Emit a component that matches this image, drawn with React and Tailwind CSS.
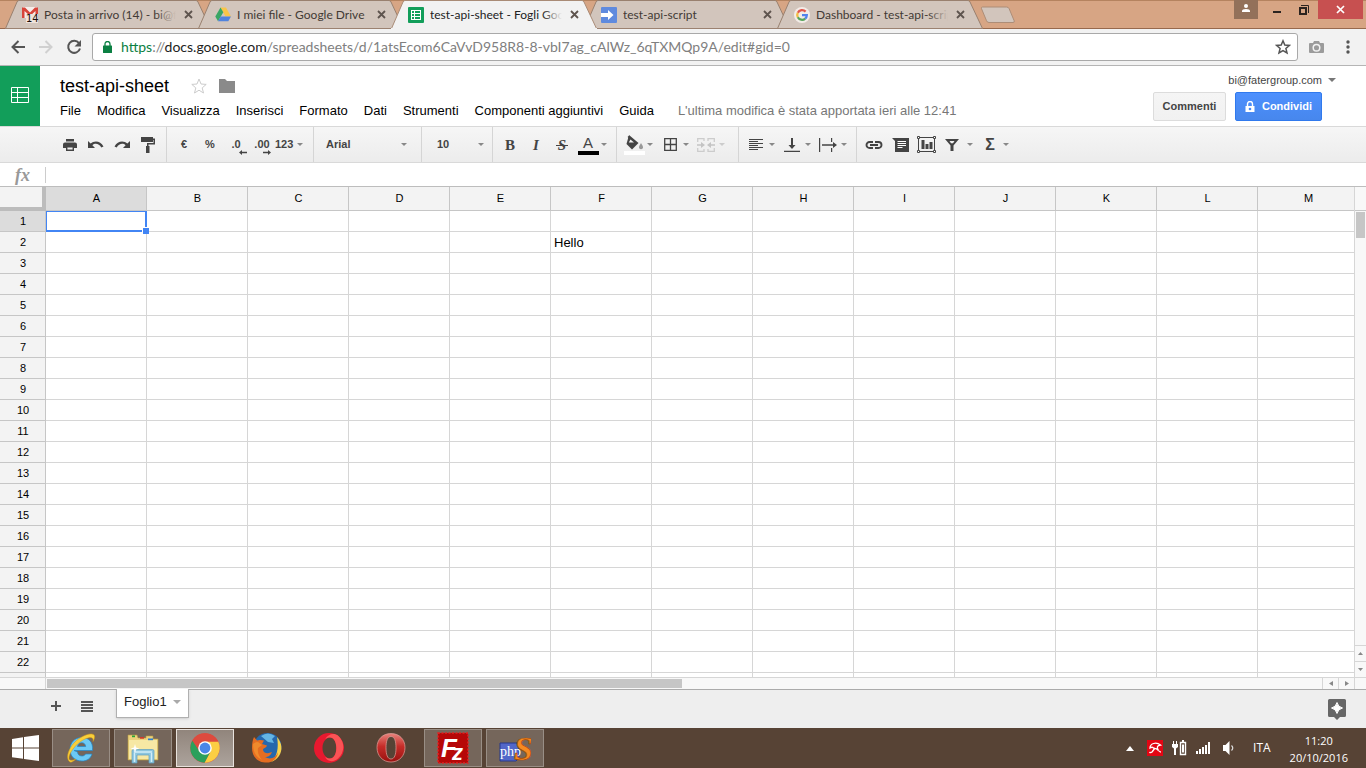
import React, { useState } from 'react';
import { clsx } from 'clsx';

const tabs = [
  { title: 'Posta in arrivo (14) - bi@fatergroup.com', icon: 'gmail', fade: true },
  { title: 'I miei file - Google Drive', icon: 'drive' },
  { title: 'test-api-sheet - Fogli Google', icon: 'sheets', fade: true },
  { title: 'test-api-script', icon: 'script' },
  { title: 'Dashboard - test-api-script', icon: 'google', fade: true },
];

const menus = ['File', 'Modifica', 'Visualizza', 'Inserisci', 'Formato', 'Dati', 'Strumenti', 'Componenti aggiuntivi', 'Guida'];
const columns = 'ABCDEFGHIJKLM'.split('');
const rows = Array.from({ length: 23 }, (_, i) => i + 1);
const initialCells = { F2: 'Hello' };

function Favicon({ name }) {
  if (name === 'gmail') {
    return (
      <svg width="17" height="17" viewBox="0 0 17 17">
        <rect x="1" y="1" width="14" height="11" fill="#f6eeea" />
        <path d="M0 1.500h3l5 5 5-5h3V12h-2.500V5L8 10 2.500 5v7H0z" fill="#d8453a" />
        <rect x="4" y="8" width="12" height="9" fill="#efe3dc" />
        <text x="4" y="16" fontSize="10" fill="#1b0d08" fontFamily="DejaVu Sans">14</text>
      </svg>
    );
  }
  if (name === 'drive') {
    return (
      <svg width="17" height="17" viewBox="0 0 17 17">
        <path d="M5.500 1.500h5.500l5 9h-5.500z" fill="#f9c548" />
        <path d="M5.500 1.500L8.300 6.200 3 15.200 0.300 10.500z" fill="#3aa665" />
        <path d="M5.700 10.500H16l-2.700 4.700H3z" fill="#5183dd" />
      </svg>
    );
  }
  if (name === 'sheets') {
    return (
      <svg width="16" height="16" viewBox="0 0 16 16">
        <rect width="16" height="16" rx="1" fill="#129e5a" />
        <path d="M3 3h10v10H3z" fill="#fff" />
        <path d="M4 4h2v2H4zM7 4h5v2H7zM4 7h2v2H4zM7 7h5v2H7zM4 10h2v2H4zM7 10h5v2H7z" fill="#129e5a" />
      </svg>
    );
  }
  if (name === 'script') {
    return (
      <svg width="16" height="16" viewBox="0 0 16 16">
        <rect width="16" height="16" rx="1" fill="#5f8ade" />
        <path d="M0 6h7V3l5.500 5L7 13v-3H0z" fill="#fff" />
      </svg>
    );
  }
  return (
    <svg width="16" height="16" viewBox="0 0 16 16">
      <circle cx="8" cy="8" r="8" fill="#f3ece8" />
      <g fill="none" strokeWidth="2.300">
        <path d="M11.600 4.600A4.800 4.800 0 0 0 3.800 5.700" stroke="#e2574c" />
        <path d="M3.800 5.700A4.800 4.800 0 0 0 3.800 10.300" stroke="#f2bd42" />
        <path d="M3.800 10.300A4.800 4.800 0 0 0 11.200 11.600" stroke="#58a55c" />
        <path d="M11.200 11.600A4.800 4.800 0 0 0 12.800 8.200H8" stroke="#5383ec" />
      </g>
    </svg>
  );
}

function BrowserTab({ tab, active, first }) {
  return (
    <div role="tab" aria-selected={active} className={clsx('relative h-[29px] w-[206px] shrink-0', !first && '-ml-[13px]', active && 'z-10')}>
      <svg className="absolute inset-0 h-full w-full" viewBox="0 0 206 29" preserveAspectRatio="none">
        <path d="M0.500 28.500L12 2Q12.500 0.500 14 0.500H191Q192.500 0.500 193 2L205.500 28.500" fill={active ? '#f2f2f2' : '#d2c5bc'} stroke={active ? '#a98b76' : '#99806f'} />
        <path d="M0 28.500H206" stroke={active ? '#f2f2f2' : '#9c8271'} />
      </svg>
      <div className="relative flex h-full items-center pl-[17px] pr-3">
        <span className="flex w-[17px] shrink-0"><Favicon name={tab.icon} /></span>
        <span className={clsx("relative ml-[5px] w-[132px] overflow-hidden whitespace-nowrap font-['Lato',sans-serif] text-[12px] leading-4", active ? 'text-[#222]' : 'text-[#423a35]')}>
          {tab.title}
          {tab.fade && <span className={clsx('absolute inset-y-0 right-0 w-5 bg-linear-to-r from-transparent', active ? 'to-[#f2f2f2]' : 'to-[#d2c5bc]')} />}
        </span>
        <button aria-label="Chiudi scheda" className="ml-2">
          <svg width="9" height="9" viewBox="0 0 9 9"><path d="M1 1l7 7M8 1l-7 7" stroke="#5e544e" strokeWidth="1.800" /></svg>
        </button>
      </div>
    </div>
  );
}

function TabStrip() {
  return (
    <div className="flex h-[29px] shrink-0 justify-between bg-[#d7a584] shadow-[inset_0_-1px_#97694d,inset_0_1px_#b5835f]">
      <div role="tablist" className="flex pl-[5px]">
        {tabs.map((tab, i) => <BrowserTab key={tab.title} tab={tab} active={i === 2} first={i === 0} />)}
        <button aria-label="Nuova scheda" className="-ml-[3px] self-center">
          <svg width="36" height="18" viewBox="0 0 36 18">
            <path d="M2.500 1h24q2 0 2.700 1.800l5 12q.6 1.700-1.200 1.700h-24q-1.800 0-2.500-1.800l-5-12Q1 1 2.500 1z" fill="#d2c5bc" stroke="#ad8d77" />
          </svg>
        </button>
      </div>
      <div className="flex h-[19px] pr-[3px]">
        <button aria-label="Profilo" className="flex w-6 justify-center bg-[#93715a] pt-1">
          <svg width="10" height="9" viewBox="0 0 10 9" fill="#fff"><circle cx="5" cy="2" r="2" /><path d="M1 8V7q0-2 4-2t4 2v1z" /></svg>
        </button>
        <button aria-label="Riduci a icona" className="ml-3 flex w-[14px] items-center justify-center pt-1">
          <svg width="10" height="2"><rect x="1" width="8" height="2" fill="#2b2420" /></svg>
        </button>
        <button aria-label="Ripristina" className="ml-[13px] flex w-[14px] items-center justify-center">
          <svg width="12" height="12" viewBox="0 0 12 12" fill="none" stroke="#2b2420"><path d="M2 4h6v6H2z" strokeWidth="2" /><path d="M3 1.500h7.500V9" /></svg>
        </button>
        <button aria-label="Chiudi" className="ml-[7px] flex w-[45px] items-center justify-center bg-[#c75050]">
          <svg width="9" height="9" viewBox="0 0 9 9"><path d="M1 1l7 7M8 1l-7 7" stroke="#fff" strokeWidth="1.700" /></svg>
        </button>
      </div>
    </div>
  );
}

function AddressBar() {
  return (
    <div className="flex h-[37px] shrink-0 items-center border-b border-[#b5b5b5] bg-[#f2f2f2] pl-1">
      <button aria-label="Indietro" className="flex w-7 justify-center">
        <svg width="16" height="16" viewBox="0 0 16 16" fill="none" stroke="#555" strokeWidth="2"><path d="M15 8H2.500M8.500 2L2.500 8l6 6" /></svg>
      </button>
      <button aria-label="Avanti" className="flex w-7 justify-center">
        <svg width="16" height="16" viewBox="0 0 16 16" fill="none" stroke="#d0d0d0" strokeWidth="2"><path d="M1 8h12.500M7.500 2l6 6-6 6" /></svg>
      </button>
      <button aria-label="Ricarica" className="flex w-7 justify-center">
        <svg width="16" height="16" viewBox="0 0 16 16"><path d="M13 4.200A6 6 0 1 0 14 9.500" fill="none" stroke="#555" strokeWidth="2" /><path d="M15 1v6.500H8.500z" fill="#555" /></svg>
      </button>
      <div className="ml-1 flex h-7 flex-1 items-center rounded-[3px] border border-[#a9a9a9] bg-white pl-[10px] pr-[6px]">
        <svg width="9" height="12" viewBox="0 0 9 12"><rect y="4.500" width="9" height="7.500" rx=".5" fill="#0b8043" /><path d="M2 5V3a2.500 2.500 0 0 1 5 0v2" fill="none" stroke="#0b8043" strokeWidth="1.300" /></svg>
        <div className="ml-[9px] flex-1 whitespace-nowrap font-['Lato',sans-serif] text-[14px] leading-5 text-[#808080]">
          <span className="text-[#0b8043]">https</span>://<span className="text-[#222]">docs.google.com</span>/spreadsheets/d/1atsEcom6CaVvD958R8-8-vbI7ag_cAlWz_6qTXMQp9A/edit#gid=0
        </div>
        <button aria-label="Aggiungi ai preferiti">
          <svg width="16" height="16" viewBox="0 0 16 16"><path d="M8 1.800l1.800 4.200 4.600.4-3.500 3 1.100 4.500L8 11.500l-4 2.400 1.100-4.500-3.500-3 4.600-.4z" fill="none" stroke="#555" strokeWidth="1.500" /></svg>
        </button>
      </div>
      <button aria-label="Cattura schermo" className="flex w-9 justify-center">
        <svg width="15" height="14" viewBox="0 0 15 14"><path d="M1 3h3l1-2h5l1 2h3q1 0 1 1v8q0 1-1 1H1q-1 0-1-1V4q0-1 1-1z" fill="#9b9b9b" /><circle cx="7.500" cy="7.700" r="3.300" fill="none" stroke="#f2f2f2" strokeWidth="1.500" /></svg>
      </button>
      <button aria-label="Menu" className="flex w-8 justify-center pr-1">
        <svg width="4" height="14" viewBox="0 0 4 14" fill="#555"><circle cx="2" cy="2" r="1.700" /><circle cx="2" cy="7" r="1.700" /><circle cx="2" cy="12" r="1.700" /></svg>
      </button>
    </div>
  );
}

function DocHeader() {
  return (
    <header className="flex h-[60px] shrink-0">
      <a href="#home" aria-label="Fogli" className="flex w-10 items-center justify-center bg-[#129e5a]">
        <svg width="18" height="18" viewBox="0 0 18 18" fill="none" stroke="#fff"><path d="M.5.500h17v15H.5zM.5 5.500h17M.5 10.500h17M6.500.500v15" /></svg>
      </a>
      <div className="flex-1 pl-5">
        <div className="flex h-8 items-center pt-2">
          <h1 className="text-[18px] leading-6">test-api-sheet</h1>
          <button aria-label="Speciale" className="ml-[21px]">
            <svg width="18" height="18" viewBox="0 0 18 18"><path d="M9 2l2 5 5.200.4-4 3.500 1.300 5.100L9 13.200 4.500 16l1.300-5.100-4-3.500L7 7z" fill="none" stroke="#ccc" /></svg>
          </button>
          <button aria-label="Sposta in" className="ml-[11px]">
            <svg width="16" height="14" viewBox="0 0 16 14"><path d="M0 0h6l2 2h8v12H0z" fill="#8a8a8a" /></svg>
          </button>
        </div>
        <nav className="flex items-center gap-4 whitespace-nowrap pt-1 text-[13px] leading-[18px]">
          {menus.map(m => <button key={m}>{m}</button>)}
          <span className="ml-2 text-[#777]">L'ultima modifica è stata apportata ieri alle 12:41</span>
        </nav>
      </div>
      <div className="flex flex-col items-end pr-[30px] pt-[6px]">
        <button className="flex h-4 items-center text-[11px] text-[#444]">
          bi@fatergroup.com
          <svg className="ml-[6px]" width="8" height="4" viewBox="0 0 8 4"><path d="M0 0h8L4 4z" fill="#777" /></svg>
        </button>
        <div className="mr-[14px] mt-1 flex gap-[9px] text-[11px] font-bold">
          <button className="h-[29px] w-[73px] rounded-[2px] border border-[#dcdcdc] bg-linear-to-b from-[#f5f5f5] to-[#f1f1f1] text-[#444]">Commenti</button>
          <button className="flex h-[29px] w-[87px] items-center justify-center gap-[7px] rounded-[2px] border border-[#3079ed] bg-linear-to-b from-[#4d90fe] to-[#4787ed] text-white">
            <svg width="10" height="12" viewBox="0 0 10 12"><path d="M.5 5h9v6h-9z" fill="#fff" /><path d="M2.500 5V3a2.500 2.500 0 0 1 5 0v2" fill="none" stroke="#fff" strokeWidth="1.400" /><circle cx="5" cy="8" r="1.300" fill="#4a8af5" /></svg>
            Condividi
          </button>
        </div>
      </div>
    </header>
  );
}

const Caret = ({ faded }) => (
  <svg width="6" height="3" viewBox="0 0 6 3" className="shrink-0"><path d="M0 0h6L3 3z" fill={faded ? '#ccc' : '#888'} /></svg>
);

function Tool({ label, children, menu, faded }) {
  return (
    <button aria-label={label} className={clsx('flex h-full items-center', menu ? 'w-9' : 'w-[26px]')}>
      <span className="flex w-[26px] shrink-0 items-center justify-center">{children}</span>
      {menu && <Caret faded={faded} />}
    </button>
  );
}

const Group = ({ children, className }) => (
  <div className={clsx('flex h-full shrink-0 items-center border-r border-[#d5d5d5]', className)}>{children}</div>
);

const Icon = ({ children, w = 18, h = 18 }) => (
  <svg width={w} height={h} viewBox={`0 0 ${w} ${h}`} fill="#444" className="shrink-0">{children}</svg>
);

function Toolbar() {
  return (
    <div role="toolbar" className="flex h-[37px] shrink-0 items-center border-y border-[#d9d9d9] bg-linear-to-b from-[#f6f6f6] to-[#ececec] text-[11px] font-bold text-[#444]">
      <Group className="pl-[57px] pr-[5px]">
        <Tool label="Stampa"><Icon w={14} h={12}><path d="M3 0h8v2.500H3zM2 3.500h10q2 0 2 2V9h-3V7H3v2H0V5.500q0-2 2-2z" /><path d="M3.700 7.700h6.600v3.600H3.700z" fill="none" stroke="#444" strokeWidth="1.400" /></Icon></Tool>
        <Tool label="Annulla"><Icon w={16} h={8}><path d="M0 0l2.600 2.500C6 -.5 12.500-.5 15.500 5.500l-2.200 1C11 2.500 7 1.800 4.400 4.300L7 7H0z" /></Icon></Tool>
        <Tool label="Ripeti"><Icon w={16} h={8}><path d="M16 0l-2.600 2.500C10-.5 3.500-.5.5 5.500l2.200 1C5 2.500 9 1.800 11.600 4.300L9 7h7z" /></Icon></Tool>
        <Tool label="Copia formato"><Icon w={14} h={16}><path d="M0 0h12v5H0zM12 1.500h2v6H7.500V9h-1.500V6h6.500V3H12zM5 9h3.500v7H5z" /></Icon></Tool>
      </Group>
      <Group className="pl-1 pr-1">
        <Tool label="Valuta">€</Tool>
        <Tool label="Percentuale">%</Tool>
        <Tool label="Riduci decimali">
          <span className="relative">.0<svg className="absolute -bottom-[2px] left-2" width="8" height="5" viewBox="0 0 8 5" fill="#444"><path d="M0 2.500L3 0v1.700h5v1.600H3V5z" /></svg></span>
        </Tool>
        <Tool label="Aumenta decimali">
          <span className="relative">.00<svg className="absolute -bottom-[2px] left-[9px]" width="8" height="5" viewBox="0 0 8 5" fill="#444"><path d="M8 2.500L5 0v1.700H0v1.600h5V5z" /></svg></span>
        </Tool>
        <button className="flex w-[34px] items-center gap-1">123<Caret /></button>
      </Group>
      <Group className="w-[108px] px-1">
        <button className="flex w-full items-center justify-between pl-2 pr-[10px]">Arial<Caret /></button>
      </Group>
      <Group className="w-[71px] px-1">
        <button className="flex w-full items-center justify-between pl-[11px] pr-1">10<Caret /></button>
      </Group>
      <Group className="pl-1 pr-[5px]">
        <Tool label="Grassetto"><span className="font-['Liberation_Serif',serif] text-[15px] font-bold leading-4">B</span></Tool>
        <Tool label="Corsivo"><span className="font-['Liberation_Serif',serif] text-[15px] font-bold italic leading-4">I</span></Tool>
        <Tool label="Barrato">
          <span className="relative px-[2px] font-['Liberation_Serif',serif] text-[15px] font-bold italic leading-4">
            S<span className="absolute inset-x-0 top-2 h-px bg-[#444]" />
          </span>
        </Tool>
        <Tool label="Colore testo" menu>
          <span className="flex flex-col items-center"><span className="text-[15px] leading-4 font-normal">A</span><span className="h-1 w-[21px] bg-black" /></span>
        </Tool>
      </Group>
      <Group className="pl-1 pr-[9px]">
        <Tool label="Colore riempimento" menu>
          <Icon w={21} h={20}>
            <path d="M5 0l9.500 8L8 14.500 2.500 9z" /><path d="M4 1.500l7 6M5 9V4l5 3" stroke="#444" strokeWidth="1.300" fill="none" /><path d="M6.500 4.500L10 7.500H4.800z" fill="#f2f2f2" />
            <path d="M17 8q2 3 2 4.200a2 2 0 0 1-4 0Q15 11 17 8z" fill="#999" /><path d="M0 16h21v4H0z" fill="#fff" />
          </Icon>
        </Tool>
        <Tool label="Bordi" menu><Icon w={13} h={13}><path d="M.700.700h11.600v11.600H.7zM6.500.7v11.600M.7 6.500h11.600" fill="none" stroke="#444" strokeWidth="1.300" /></Icon></Tool>
        <Tool label="Unisci celle" menu faded>
          <Icon w={18} h={14}><path d="M7 3V.7H.7V4M.7 10v3.300H7V11M11 3V.7h6.300V4M17.300 10v3.300H11V11" fill="none" stroke="#ccc" strokeWidth="1.300" /><path d="M0 6.300h4V4l4 3-4 3V7.700H0zM18 6.300h-4V4l-4 3 4 3V7.700h4z" fill="#c4c4c4" /></Icon>
        </Tool>
      </Group>
      <Group className="pl-1 pr-[5px]">
        <Tool label="Allineamento orizzontale" menu><Icon w={14} h={11}><path d="M0 .5h14M0 2.500h9M0 4.500h14M0 6.500h9M0 8.500h14M0 10.500h9" stroke="#444" /></Icon></Tool>
        <Tool label="Allineamento verticale" menu><Icon w={16} h={14}><path d="M7 0h2v7h2.500L8 11 4.500 7H7zM0 12.700h16v1.200H0z" /></Icon></Tool>
        <Tool label="A capo automatico" menu><Icon w={18} h={14}><path d="M0 0h1.200v14H0zM12 0h1.200v4H12zM12 10h1.200v4H12zM3 6.200h11V4l4 3-4 3V7.800H3z" /></Icon></Tool>
      </Group>
      <div className="flex h-full items-center px-1">
        <Tool label="Inserisci link"><Icon w={18} h={8}><path d="M8 1H4.500a3 3 0 0 0 0 6H8M10 1h3.500a3 3 0 0 1 0 6H10M5 4h8" fill="none" stroke="#444" strokeWidth="1.900" /></Icon></Tool>
        <Tool label="Inserisci commento"><Icon w={17} h={14}><path d="M0 0h17v14H3V3z" /><path d="M5.500 3.500H14M5.500 5.500H14M5.500 7.500H14M5.500 9.500h5" stroke="#fff" strokeWidth="1" /></Icon></Tool>
        <Tool label="Inserisci grafico">
          <Icon w={19} h={17}><path d="M1.500 1.500h16v14h-16z" fill="none" stroke="#444" /><path d="M4.500 4h3v9h-3zM8.500 8h3v5h-3zM12.500 6h3v7h-3z" /><path d="M.5.500h2v2h-2zM16.500.500h2v2h-2zM.5 14.500h2v2h-2zM16.500 14.500h2v2h-2z" fill="#fff" stroke="#444" /></Icon>
        </Tool>
        <Tool label="Filtro"><Icon w={14} h={12}><path d="M0 0h14L8.500 6.500V12h-3V6.500zM4.500 2L6 4.200h2L9.500 2z" fillRule="evenodd" /></Icon></Tool>
        <span className="flex w-3 pl-[2px]"><Caret /></span>
        <Tool label="Funzioni" menu><span className="text-[16px] leading-4">Σ</span></Tool>
      </div>
    </div>
  );
}

function Grid() {
  const [selected, setSelected] = useState('A1');
  return (
    <main className="flex min-h-0 flex-1 bg-[#f8f8f8]">
      <div className="flex min-w-0 flex-1 flex-col">
        <div className="min-h-0 flex-1 overflow-hidden bg-white">
          <table className="w-[1359px] table-fixed border-separate border-spacing-0 text-[11px] leading-4">
            <colgroup>
              <col className="w-[46px]" />
              {columns.map(c => <col key={c} className="w-[101px]" />)}
            </colgroup>
            <thead>
              <tr className="h-6">
                <th aria-label="Seleziona tutto" className="border-b-4 border-r-4 border-[#bcbcbc] bg-[#f3f3f3] p-0" />
                {columns.map(c => (
                  <th key={c} scope="col" className={clsx('border-b border-r border-[#c6c6c6] p-0 pb-px pl-px font-normal', selected[0] === c ? 'bg-[#dcdcdc]' : 'bg-[#f3f3f3]')}>{c}</th>
                ))}
              </tr>
            </thead>
            <tbody>
              {rows.map(r => (
                <tr key={r} className="h-[21px]">
                  <th scope="row" className={clsx('border-b border-r border-[#c6c6c6] p-0 pl-px font-normal', selected.slice(1) === String(r) ? 'bg-[#dcdcdc]' : 'bg-[#f3f3f3]')}>{r}</th>
                  {columns.map(c => {
                    const id = c + r;
                    return (
                      <td key={id} onClick={() => setSelected(id)} className="relative border-b border-r border-[#d6d6d6] px-[3px] pb-0 pt-[2px] text-[13px]">
                        {initialCells[id]}
                        {selected === id && (
                          <span className="absolute -bottom-px -right-px left-0 top-0 z-10 border-2 border-l border-t border-[#4285f4]">
                            <span className="absolute -bottom-1 -right-1 size-[7px] border-l border-t border-white bg-[#4285f4]" />
                          </span>
                        )}
                      </td>
                    );
                  })}
                </tr>
              ))}
            </tbody>
          </table>
        </div>
        <div className="flex h-3 shrink-0 border-t border-[#d6d6d6]">
          <div className="w-[46px] border-r border-[#d6d6d6]" />
          <div className="flex-1 py-px pl-px"><div className="h-full w-[calc(50%-3px)] bg-[#c6c6c6]" /></div>
          <button aria-label="Scorri a sinistra" className="flex w-4 items-center justify-center border-l border-[#d6d6d6]"><svg width="4" height="5"><path d="M4 0v5L0 2.500z" fill="#888" /></svg></button>
          <button aria-label="Scorri a destra" className="flex w-4 items-center justify-center border-l border-[#d6d6d6]"><svg width="4" height="5"><path d="M0 0v5l4-2.500z" fill="#888" /></svg></button>
        </div>
      </div>
      <div className="flex w-3 shrink-0 flex-col border-l border-[#d6d6d6]">
        <div className="h-6 border-b border-[#c6c6c6]" />
        <div className="flex-1 px-px pt-px"><div className="h-[26px] bg-[#c6c6c6]" /></div>
        <button aria-label="Scorri in alto" className="flex h-4 items-center justify-center border-t border-[#d6d6d6]"><svg width="5" height="3"><path d="M0 3h5L2.500 0z" fill="#888" /></svg></button>
        <button aria-label="Scorri in basso" className="flex h-4 items-center justify-center border-t border-[#d6d6d6]"><svg width="5" height="3"><path d="M0 0h5L2.500 3z" fill="#888" /></svg></button>
        <div className="h-3 border-t border-[#d6d6d6]" />
      </div>
    </main>
  );
}

function SheetBar() {
  return (
    <div className="flex h-[39px] shrink-0 border-t border-[#ababab] bg-[#eee] pl-[43px]">
      <button aria-label="Aggiungi foglio" className="flex h-8 w-[26px] items-center justify-center">
        <svg width="10" height="10"><path d="M5 0v10M0 5h10" stroke="#555" strokeWidth="2" /></svg>
      </button>
      <button aria-label="Tutti i fogli" className="ml-[5px] flex h-[33px] w-[26px] items-center justify-center">
        <svg width="12" height="11"><path d="M0 1h12M0 4h12M0 7h12M0 10h12" stroke="#555" strokeWidth="2" /></svg>
      </button>
      <button className="-mt-px ml-4 flex h-[29px] w-[73px] items-center justify-between border border-t-0 border-[#b0b0b0] bg-white pb-[2px] pl-[7px] pr-[7px] text-[13px] text-[#222] shadow-sm">
        Foglio1
        <svg width="8" height="4" viewBox="0 0 8 4"><path d="M0 0h8L4 4z" fill="#aaa" /></svg>
      </button>
      <button aria-label="Esplora" className="ml-auto mr-5 self-center">
        <svg width="18" height="21" viewBox="0 0 18 21"><path d="M1.500 0h15Q18 0 18 1.500v15q0 1.500-1.500 1.500H12l-3 3-3-3H1.500Q0 18 0 16.500v-15Q0 0 1.500 0z" fill="#666" /><path d="M9 3.500Q10 8 14.500 9 10 10 9 14.500 8 10 3.500 9 8 8 9 3.500z" fill="#fff" stroke="#fff" /></svg>
      </button>
    </div>
  );
}

const appIcons = {
  'Internet Explorer': (
    <svg width="32" height="32" viewBox="0 0 32 32">
      <path d="M9 18.500h18.500C28.500 9.500 23 5.500 16.800 5.500 9.500 5.500 5 11 5 17.500S9.500 29 17 29c5 0 8.700-2.500 10-7h-6.500c-.8 1.500-2 2-3.500 2-2.700 0-4.300-1.500-4.500-4zM12.500 14.500c.4-2.500 2-3.800 4.200-3.800s3.700 1.300 4 3.800z" fill="#6cc9f5" stroke="#2187c9" strokeWidth=".7" />
      <path d="M5 30C-1 26 5 12 15 6 22 1.500 29 .5 29.500 4c.3 2-.7 4-1.500 5.500C29 5 25.500 4.500 20 7 9 12 1 26 5 28c1.500.8 4 0 6-1-2.500 2.500-4.800 3.500-6 3z" fill="#f9cf3a" stroke="#d79a13" strokeWidth=".5" />
    </svg>
  ),
  'Esplora file': (
    <svg width="32" height="32" viewBox="0 0 32 32">
      <path d="M1 3h9l1 3h8V4h7v3h5v21H1z" fill="#ecd27c" stroke="#b79a43" strokeWidth=".6" /><path d="M2 8h28v19H2z" fill="#f7e8a4" />
      <path d="M5 3.500h3v1.700H5z" fill="#27a536" /><path d="M13 5h4v1.700h-4z" fill="#cf3b2b" /><path d="M21 6.500h5v1.700h-5z" fill="#2d7fd2" />
      <path d="M5 19q0-1.500 1.500-1.500h19Q27 17.500 27 19v12h-5v-8H10v8H5z" fill="#8cc5de" stroke="#5e9fbe" strokeWidth=".7" /><path d="M7 20h18M7.500 21v9M24.500 21v9" stroke="#d0edf8" strokeWidth="1.300" />
      <path d="M8 12l1 3.500 3.500 1L9 17.500 8 21l-1-3.500-3.500-1L7 15.500z" fill="#fff" />
    </svg>
  ),
  'Google Chrome': (
    <svg width="30" height="30" viewBox="0 0 30 30">
      <circle cx="15" cy="15" r="14.700" fill="#dd4b3e" />
      <path d="M15 8.500h13.200A14.700 14.700 0 0 1 14.500 29.700L20.600 18.200z" fill="#fcce43" />
      <path d="M2.300 7.600A14.700 14.700 0 0 0 14.500 29.700l6.100-11.500H9.400z" fill="#2ba05b" />
      <path d="M2.300 7.600A14.700 14.700 0 0 1 28.200 8.500H15q-6 0-6.500 6.300z" fill="#dd4b3e" />
      <circle cx="15" cy="15" r="6.800" fill="#fff" /><circle cx="15" cy="15" r="5.400" fill="#4a86e8" />
    </svg>
  ),
  Firefox: (
    <svg width="32" height="32" viewBox="0 0 32 32">
      <circle cx="16.500" cy="15" r="14" fill="#2668ad" /><path d="M10 4q7-5 14 0l-3 3 2 4-6-1z" fill="#64b5e4" />
      <path d="M26 5c5 6 6 13 2 19-2 3-5 5-8 6 6-5 8-14 6-25z" fill="#f8d24a" />
      <path d="M3 5l3 3.500C8 7.500 11 8 13 8.500L11 12l5 1.500c-.5 2.500-4 2.500-4 4.500 1 3.500 5 4 9 2-1.500 4-4 5-7 5 5 3 11 1 13-5 0 6-6 11.500-13 10.500C6 30 1 24 1 16c0-4 .5-8 2-11z" fill="#e56d21" />
      <path d="M2 12q0 12 9 16-5-6-4-12l4-3-4-3q-3 0-5 2z" fill="#f08a2c" />
    </svg>
  ),
  Opera: (
    <svg width="32" height="32" viewBox="0 0 32 32">
      <path d="M16 1a15 15 0 0 0 0 30 15 15 0 0 0 0-30zM17 5.500c3.800 0 6.300 4.500 6.300 10.500S20.800 26.500 17 26.500 9.500 22 9.500 16 13.200 5.500 17 5.500z" fill="#e8192f" fillRule="evenodd" />
      <path d="M17 5.500c3.800 0 6.300 4.500 6.300 10.500S20.800 26.500 17 26.500c-2 0-3.500-.5-5-2 2 5 8 6.500 13 2A15 15 0 0 0 25.500 4C21 .5 15 2 12 7.500c1.500-1.500 3-2 5-2z" fill="#fb5355" />
    </svg>
  ),
  'Opera 12': (
    <svg width="30" height="30" viewBox="0 0 30 30">
      <defs><linearGradient id="opera" x2="0" y2="1"><stop stopColor="#e8837c" /><stop offset=".45" stopColor="#c62d29" /><stop offset="1" stopColor="#98110f" /></linearGradient></defs>
      <path d="M15 .5C6.500.5 1 6.500 1 14.500S6.500 29 15 29s14-6.500 14-14.500S23.500.5 15 .5zM15 3.500c3.500 0 5 4.500 5 11.300S18.500 26 15 26s-5-4.500-5-11.200S11.500 3.500 15 3.500z" fill="url(#opera)" fillRule="evenodd" stroke="#e2a19b" strokeWidth=".7" />
    </svg>
  ),
  FileZilla: (
    <svg width="32" height="32" viewBox="0 0 32 32">
      <rect x="1" y="1" width="30" height="30" fill="#b60808" stroke="#e02424" strokeWidth="1.500" strokeDasharray="2 1.500" />
      <text x="4" y="25" fontSize="26" fontWeight="bold" fontStyle="italic" fill="#fff" fontFamily="Liberation Sans">F<tspan x="15" y="28" fontSize="22">z</tspan></text>
    </svg>
  ),
  'PHP Designer': (
    <svg width="32" height="32" viewBox="0 0 32 32">
      <path d="M1 11h19v15l-3 3H1z" fill="#5267c9" stroke="#27398c" />
      <text x="1" y="24" fontSize="14" fill="#fff" fontFamily="Liberation Serif">
        php<tspan x="15" y="28" fontSize="34" fontWeight="bold" fontStyle="italic" fill="#f58a22" stroke="#a84906" strokeWidth=".7">S</tspan>
      </text>
    </svg>
  ),
};

const taskbarApps = [
  { name: 'Internet Explorer', open: true },
  { name: 'Esplora file', open: true },
  { name: 'Google Chrome', active: true },
  { name: 'Firefox' },
  { name: 'Opera' },
  { name: 'Opera 12' },
  { name: 'FileZilla', open: true },
  { name: 'PHP Designer', open: true },
];

function Taskbar() {
  return (
    <footer className="flex h-10 shrink-0 bg-[#574335]">
      <button aria-label="Start" className="flex w-[50px] items-center justify-center">
        <svg width="27" height="26" viewBox="0 0 27 26" fill="#fff"><path d="M0 4l11-1.700v10.200H0zM12 2.100L27 0v12.500H12zM0 13.500h11v10.300L0 22.200zM12 13.500h15V26l-15-2.100z" /></svg>
      </button>
      <div className="flex gap-1 pl-[2px] pt-px">
        {taskbarApps.map(app => (
          <button
            key={app.name}
            aria-label={app.name}
            className={clsx(
              'flex h-[38px] w-[58px] items-center justify-center border',
              app.active && 'border-[#e8e2dd] bg-linear-to-b from-[#91857c] to-[#aca39c]',
              app.open && 'border-[#998e85] bg-[#75665b]',
              !app.open && !app.active && 'border-transparent'
            )}
          >
            {appIcons[app.name]}
          </button>
        ))}
      </div>
      <div className="ml-auto flex items-center font-['Open_Sans',sans-serif] text-[12px] text-white">
        <svg width="8" height="5"><path d="M0 5h8L4 0z" fill="#fff" /></svg>
        <svg className="ml-[13px]" width="16" height="16" viewBox="0 0 16 16">
          <rect width="16" height="16" fill="#e30613" />
          <path d="M3 8C3 3.500 9 1.500 13.500 5 10 5.500 9.500 7.500 11.500 10.500 10 9 8.500 8 7 8.500 6 7 4.500 7 3 8z" fill="none" stroke="#fff" strokeWidth="1.300" />
          <path d="M8 8l-3 4q-1.500 1.300-2.500 0M11.500 10.500q1 1.500 2.500 1.500" fill="none" stroke="#fff" strokeWidth="1.300" />
        </svg>
        <svg className="ml-[9px]" width="15" height="16" viewBox="0 0 15 16"><path d="M8.500 2.500h5v12h-5z" fill="#574335" stroke="#fff" strokeWidth="1.400" /><path d="M10 0h2v2h-2zM10 4.500h2v8h-2z" fill="#fff" /><path d="M1.500 1v4M4.500 1v4" stroke="#fff" /><path d="M0 4h6v3L4 8.500V15H2V8.500L0 7z" fill="#fff" /></svg>
        <svg className="ml-[9px]" width="15" height="12" viewBox="0 0 15 12" fill="#fff"><path d="M0 9h2v3H0zM3 7h2v5H3zM6 5h2v7H6zM9 3h2v9H9zM12 0h2v12h-2z" /></svg>
        <svg className="ml-3" width="12" height="14" viewBox="0 0 12 14"><path d="M0 4h2.500L6.500 0v14L2.500 10H0z" fill="#fff" /><path d="M8.500 4.500q2.500 2.500 0 5" fill="none" stroke="#ddd" strokeWidth="1.200" /></svg>
        <span className="ml-[18px]">ITA</span>
        <time className="ml-[19px] mr-[18px] pt-px text-center text-[11px] leading-[17px]">11:20<br />20/10/2016</time>
      </div>
    </footer>
  );
}

function App() {
  return (
    <div className="flex h-screen flex-col overflow-hidden bg-white font-['Liberation_Sans',Arial,sans-serif] text-black">
      <TabStrip />
      <AddressBar />
      <DocHeader />
      <Toolbar />
      <div className="flex h-6 shrink-0 items-center border-b border-[#bdbdbd]">
        <label htmlFor="formula" className="w-[45px] text-center font-['Liberation_Serif',serif] text-[18px] font-bold italic leading-5 text-[#999]">fx</label>
        <input id="formula" className="h-4 flex-1 border-l border-[#ccc] px-2 text-[13px] outline-none" />
      </div>
      <Grid />
      <SheetBar />
      <Taskbar />
    </div>
  );
}

export default App;
